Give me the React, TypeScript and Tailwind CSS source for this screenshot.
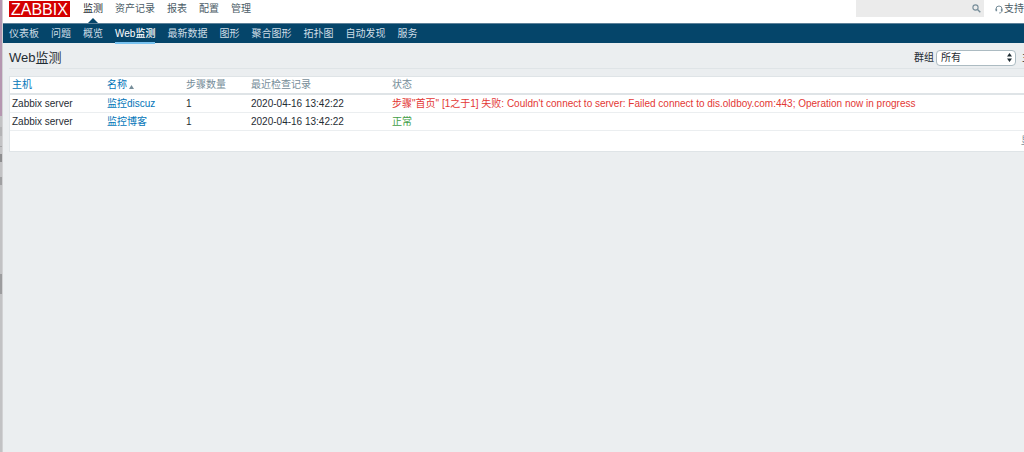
import clsx from 'clsx';
import * as React from 'react';

const MAIN_MENU = ['监测', '资产记录', '报表', '配置', '管理'];

const SUB_MENU = [
  '仪表板', '问题', '概览', 'Web监测', '最新数据', '图形', '聚合图形', '拓扑图', '自动发现', '服务',
];

interface Scenario {
  readonly host: string;
  readonly name: string;
  readonly steps: number;
  readonly lastCheck: string;
  readonly status: string;
  readonly failed: boolean;
}

const SCENARIOS: Array<Scenario> = [
  {
    host: 'Zabbix server',
    name: '监控discuz',
    steps: 1,
    lastCheck: '2020-04-16 13:42:22',
    status: '步骤"首页" [1之于1] 失败: Couldn\'t connect to server: Failed connect to dis.oldboy.com:443; Operation now in progress',
    failed: true,
  },
  {
    host: 'Zabbix server',
    name: '监控博客',
    steps: 1,
    lastCheck: '2020-04-16 13:42:22',
    status: '正常',
    failed: false,
  },
];

export default function App() {
  return (
    <div className="flex min-h-screen overflow-hidden bg-[#ebeef0] font-['Liberation_Sans','Noto_Sans_CJK_SC',sans-serif] text-[10px] leading-4 whitespace-nowrap text-[#1f2c33]">
      <WindowEdge/>
      <div className="min-w-0 flex-1">
        <Header/>
        <SubMenu/>
        <main className="-mr-[100px] pl-[6px]">
          <div className="flex h-[26px] items-center border-b border-[#dfe4e7] pt-1">
            <h1 className="text-[13px] leading-5">Web监测</h1>
            <form className="ml-auto flex items-center gap-[6px]">
              <Filter id="group" label="群组" value="所有"/>
              <Filter id="host" label="主机" value="所有"/>
            </form>
          </div>
          <ScenarioTable/>
        </main>
      </div>
    </div>
  );
}

function WindowEdge() {
  return (
    <div className="flex w-[3px] shrink-0 flex-col border-r border-[#d2d2d4] bg-[#c2c2c4]">
      <div className="h-[116px] bg-[#b596b0]"/>
      <div className="mt-[11px] h-[9px] bg-[#b3b3b5]"/>
      <div className="mt-[10px] h-px bg-[#a5a5a7]"/>
      <div className="mt-[7px] h-2 bg-[#8d8d8f]"/>
      <div className="mt-[15px] h-2 bg-[#a0a0a2]"/>
      <div className="mt-[89px] h-5 bg-[#9c9c9e]"/>
    </div>
  );
}

function Header() {
  return (
    <header className="flex h-[23px] items-start bg-white pl-[6px]">
      <a href="#" className="mt-px h-4 bg-[#d40000] px-[2px] text-[16px] leading-[18px] text-white">ZABBIX</a>
      <nav className="ml-[13px] flex gap-3">
        { MAIN_MENU.map((item, index) => (
          <a
            key={ item }
            href="#"
            className={ clsx(
              'relative h-[23px] pt-px',
              index === 0 ? 'text-[#1f2c33]' : 'text-[#4a5b66]',
            ) }
          >
            { item }
            { index === 0 && (
              <svg viewBox="0 0 10 5" className="absolute bottom-0 left-1/2 h-[5px] w-[10px] -translate-x-1/2">
                <path d="M0 5 5 0l5 5z" fill="#05456a"/>
              </svg>
            ) }
          </a>
        )) }
      </nav>
      <div className="ml-auto flex items-start">
        <label className="flex h-[17px] w-32 items-center bg-[#ebebeb] pr-[3px]">
          <input type="search" aria-label="搜索" className="h-full min-w-0 flex-1 bg-transparent px-1 outline-none"/>
          <svg viewBox="0 0 9 9" className="h-[9px] w-[9px]" fill="none" stroke="#768d99">
            <circle cx="3.5" cy="3.5" r="2.6" strokeWidth="1.1"/>
            <path d="m5.5 5.5 2.8 2.8" strokeWidth="1.4"/>
          </svg>
        </label>
        <a href="#" className="ml-[11px] flex items-center gap-px pt-px text-[#4a5b66]">
          <svg viewBox="0 0 8 9" className="h-[9px] w-2" fill="none" stroke="#768d99">
            <path d="M1 5.5V4a3 3 0 0 1 6 0v1.5c0 1.5-1 2.5-2.8 2.5"/>
            <path d="M1.4 3.8v2.4M6.6 3.8v2.4" strokeWidth="1.4"/>
          </svg>
          支持
        </a>
      </div>
    </header>
  );
}

function SubMenu() {
  return (
    <nav className="flex h-5 gap-3 border-t border-[#5d8199] bg-[#05456a] pl-[6px]">
      { SUB_MENU.map((item) => (
        <a
          key={ item }
          href="#"
          className={ clsx(
            'h-5 border-b-2 pt-[2px]',
            item === 'Web监测'
              ? 'border-[#78c2f0] font-medium text-white'
              : 'border-transparent text-[#cfdde6]',
          ) }
        >
          { item }
        </a>
      )) }
    </nav>
  );
}

interface FilterProps {
  readonly id: string;
  readonly label: string;
  readonly value: string;
}

function Filter(props: FilterProps) {
  const { id, label, value } = props;
  return (
    <div className="flex items-center gap-[2px]">
      <label htmlFor={ id }>{ label }</label>
      <div className="relative">
        <select
          id={ id }
          className="block h-4 w-20 appearance-none rounded-[4px] border border-[#acbbc2] bg-white pl-1 text-[10px] leading-3"
        >
          <option>{ value }</option>
        </select>
        <svg viewBox="0 0 5 9" className="pointer-events-none absolute top-[3px] right-1 h-[9px] w-[5px]" fill="#1f2c33">
          <path d="M0 3.6 2.5 0 5 3.6zM0 5.4 2.5 9 5 5.4z"/>
        </svg>
      </div>
    </div>
  );
}

function ScenarioTable() {
  return (
    <table className="mt-[7px] w-full table-fixed border-separate border-spacing-0 border border-[#dfe4e7] bg-white text-left">
      <colgroup>
        <col className="w-[95px]"/>
        <col className="w-[79px]"/>
        <col className="w-[65px]"/>
        <col className="w-[141px]"/>
        <col/>
      </colgroup>
      <thead>
        <tr className="text-[#768d99]">
          <HeaderCell><a href="#" className="text-[#0275b8]">主机</a></HeaderCell>
          <HeaderCell>
            <a href="#" className="flex items-center gap-[2px] text-[#0275b8]">
              名称
              <svg viewBox="0 0 5 4" className="mt-[3px] h-1 w-[5px]" fill="#768d99">
                <path d="M0 4 2.5 0 5 4z"/>
              </svg>
            </a>
          </HeaderCell>
          <HeaderCell>步骤数量</HeaderCell>
          <HeaderCell>最近检查记录</HeaderCell>
          <HeaderCell>状态</HeaderCell>
        </tr>
      </thead>
      <tbody>
        { SCENARIOS.map((scenario) => (
          <tr key={ scenario.name }>
            <Cell>{ scenario.host }</Cell>
            <Cell><a href="#" className="text-[#0275b8]">{ scenario.name }</a></Cell>
            <Cell>{ scenario.steps }</Cell>
            <Cell>{ scenario.lastCheck }</Cell>
            <Cell>
              <span className={ scenario.failed ? 'text-[#e33734]' : 'text-[#429e47]' }>
                { scenario.status }
              </span>
            </Cell>
          </tr>
        )) }
      </tbody>
      <tfoot>
        <tr>
          <td colSpan={ 5 } className="h-5 pr-2 text-right text-[#768d99]">显示 已发现的2中的2</td>
        </tr>
      </tfoot>
    </table>
  );
}

function HeaderCell(props: { readonly children: React.ReactNode }) {
  return <th className="h-[18px] border-b-2 border-[#dfe4e7] px-[2px] font-normal">{ props.children }</th>;
}

function Cell(props: { readonly children: React.ReactNode }) {
  return <td className="h-[18px] border-b border-[#ebeef0] px-[2px]">{ props.children }</td>;
}
